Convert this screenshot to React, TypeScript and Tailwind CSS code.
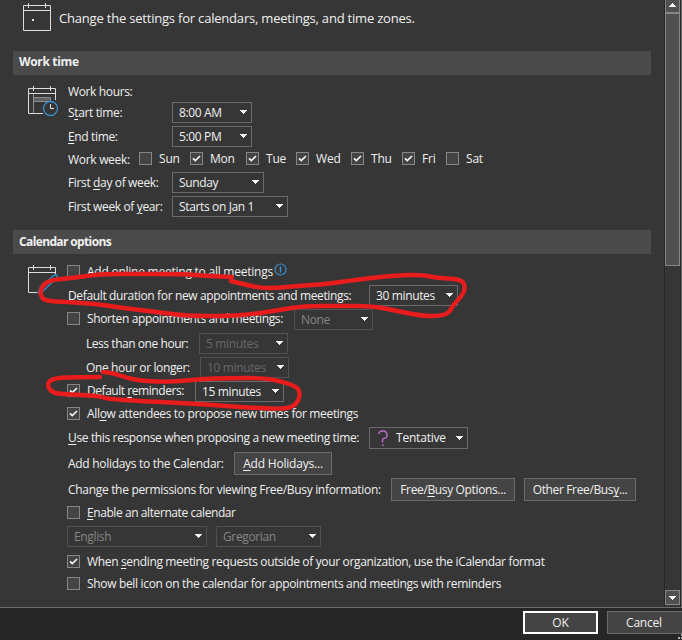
import React from 'react';
import clsx from 'clsx';

type Point = [number, number];

const days = [
  { name: 'Sun', checked: false, width: 'w-[51px]' },
  { name: 'Mon', checked: true, width: 'w-[56px]' },
  { name: 'Tue', checked: true, width: 'w-[50px]' },
  { name: 'Wed', checked: true, width: 'w-[55px]' },
  { name: 'Thu', checked: true, width: 'w-[51px]' },
  { name: 'Fri', checked: true, width: 'w-[44px]' },
  { name: 'Sat', checked: false, width: 'w-[50px]' },
];

const durationLoop: Point[] = [
  [232, 277], [207, 276], [183, 274], [133, 274], [100, 274], [73, 278], [50, 280], [42, 286], [40, 295], [45, 301],
  [67, 302], [97, 304], [123, 308], [157, 312], [187, 316], [230, 316], [253, 314], [280, 310], [303, 306], [340, 306],
  [373, 306], [397, 311], [422, 316], [440, 316], [449, 313], [453, 305], [461, 297], [465, 290], [464, 282], [457, 279],
  [437, 278], [423, 275], [403, 275], [380, 277], [347, 281], [327, 284], [297, 286], [277, 288], [260, 288], [243, 284], [231, 281],
];

const reminderLoop: Point[] = [
  [100, 377], [67, 377], [52, 379], [47, 384], [51, 392], [60, 394], [100, 396], [107, 399], [140, 401], [200, 404],
  [240, 407], [257, 408], [280, 409], [293, 407], [299, 400], [300, 391], [295, 386], [280, 381], [263, 378], [230, 378],
  [200, 379], [173, 382], [143, 381], [127, 378], [113, 373], [103, 372],
];

// Smooths a hand-drawn line by curving through the midpoints
const toPath = (points: Point[]) => {
  let d = `M${points[0][0]} ${points[0][1]}`;
  for (let i = 1; i < points.length - 1; i++) {
    const [x, y] = points[i];
    const [nx, ny] = points[i + 1];
    d += ` Q${x} ${y} ${(x + nx) / 2} ${(y + ny) / 2}`;
  }
  const last = points[points.length - 1];
  return `${d} L${last[0]} ${last[1]}`;
};

const Arrow: React.FC<{ up?: boolean; className?: string }> = ({ up, className }) => (
  <svg width="7" height="4" viewBox="0 0 7 4" shapeRendering="crispEdges" className={clsx('shrink-0', up && 'rotate-180', className)}>
    <path d="M0 0h7v1H0zM1 1h5v1H1zM2 2h3v1H2zM3 3h1v1H3z" fill="#f5f5f5" />
  </svg>
);

const Checkbox: React.FC<{ checked?: boolean }> = ({ checked }) => (
  <span className="block size-[13px] shrink-0 border border-[#868686] bg-[#444444]">
    {checked && (
      <svg width="11" height="11" viewBox="0 0 11 11">
        <path d="M2 5.3 4.3 7.6 9 3" fill="none" stroke="#f5f5f5" strokeWidth="1.7" />
      </svg>
    )}
  </span>
);

interface SelectProps {
  className: string;
  disabled?: boolean;
  dim?: boolean;
  children: React.ReactNode;
}

const Select: React.FC<SelectProps> = ({ className, disabled, dim, children }) => (
  <div
    className={clsx(
      'flex shrink-0 items-center justify-between border pr-[4px] pl-[6px]',
      disabled ? 'border-[#505050]' : 'border-[#6a6a6a]',
      disabled ? (dim ? 'text-[#676767]' : 'text-[#858585]') : 'text-[#f0f0f0]',
      className,
    )}
  >
    <span className="flex items-center">{children}</span>
    <Arrow className="mb-px" />
  </div>
);

const Button: React.FC<{ className: string; children: React.ReactNode }> = ({ className, children }) => (
  <button className={clsx('h-[23px] shrink-0 border border-[#6a6a6a] bg-[#444444] text-center leading-[21px]', className)}>
    {children}
  </button>
);

const Row: React.FC<{ className?: string; children: React.ReactNode }> = ({ className, children }) => (
  <div className={clsx('flex items-center', className ?? 'h-[21px]')}>{children}</div>
);

const U: React.FC<{ children: string }> = ({ children }) => (
  <span className="underline decoration-1 underline-offset-2">{children}</span>
);

const SectionBar: React.FC<{ title: string; className: string }> = ({ title, className }) => (
  <h2 className={clsx('ml-[13px] h-6 w-[638px] bg-[#4a4a4a] pl-[6px] font-bold', className)}>{title}</h2>
);

const App: React.FC = () => {
  return (
    <div className="relative flex h-[640px] w-[682px] flex-col overflow-hidden bg-[#363636] font-['Open_Sans','Noto_Sans',sans-serif] text-[12px] tracking-[-0.36px] whitespace-nowrap text-[#f0f0f0]">
      <div className="flex h-[607px] shrink-0">
        <main className="w-[664px] shrink-0">
          <header className="flex h-[51px] pt-[3px] pl-[23px]">
            <svg width="29" height="29" viewBox="0 0 29 29">
              <path d="M.5 27.5v-25h27v25zM.5 7.5h27M5.5 0v5M22.5 0v5" fill="none" stroke="#dcdcdc" />
              <path d="M9 16h2v2H9z" fill="#e4e4e4" />
            </svg>
            <h1 className="ml-[7px] text-[13px] leading-[30px] tracking-[-0.2px]">
              Change the settings for calendars, meetings, and time zones.
            </h1>
          </header>

          <SectionBar title="Work time" className="leading-[22px] tracking-[-0.35px]" />
          <section className="flex h-[155px]">
            <svg className="mt-[11px] ml-[28px] shrink-0" width="31" height="31" viewBox="0 0 31 31">
              <path d="M15 27.5H.5v-25h27V14M.5 7.5h27M5.5 0v5M22.5 0v5" fill="none" stroke="#dcdcdc" />
              <path d="M5.5 8v19M5.5 11.5h17v4h-17" fill="#606060" stroke="#8c8c8c" />
              <circle cx="22.5" cy="22.5" r="7" fill="#363636" stroke="#3a8fcf" strokeWidth="1.3" />
              <path d="M22.5 18v4.500H26" fill="none" stroke="#e4e4e4" />
            </svg>
            <div className="ml-[9px] pt-[7px]">
              <Row className="h-5">Work hours:</Row>
              <Row>
                <span className="w-[104px]">S<U>t</U>art time:</span>
                <Select className="h-[21px] w-[80px]">8:00 AM</Select>
              </Row>
              <Row className="mt-[3px] h-[21px]">
                <span className="w-[104px]"><U>E</U>nd time:</span>
                <Select className="h-[21px] w-[80px]">5:00 PM</Select>
              </Row>
              <Row className="mt-px h-[21px] tracking-[-0.2px]">
                <span className="w-[71px] pt-0.5 tracking-[-0.3px]">Work week:</span>
                {days.map((day) => (
                  <span key={day.name} className={clsx('flex items-center gap-[7px]', day.width)}>
                    <Checkbox checked={day.checked} />
                    {day.name}
                  </span>
                ))}
              </Row>
              <Row className="mt-[3px] h-[21px]">
                <span className="w-[104px]">First <U>d</U>ay of week:</span>
                <Select className="h-[21px] w-[92px]">Sunday</Select>
              </Row>
              <Row className="mt-[3px] h-[21px]">
                <span className="w-[104px]">First week of <U>y</U>ear:</span>
                <Select className="h-[21px] w-[116px]">Starts on Jan 1</Select>
              </Row>
            </div>
          </section>

          <SectionBar title="Calendar options" className="leading-[23px] tracking-[-0.63px]" />
          <section className="flex">
            <svg className="mt-[11px] ml-[28px] shrink-0" width="31" height="31" viewBox="0 0 31 31">
              <path d="M9 27.5H.5v-25h27V9M.5 7.5h27M5.5 0v5M22.5 0v5" fill="none" stroke="#dcdcdc" />
              <path d="m10 28 2-5L25.500 10.500q2-1.500 3.300 0t0 2.500L15 26z" fill="#363636" stroke="#3a8fcf" strokeWidth="1.3" />
            </svg>
            <div className="ml-[8px] pt-[7px]">
              <Row>
                <Checkbox />
                <span className="ml-[7px] tracking-[-0.24px]">Add online meeting to all meetings</span>
                <svg className="-mt-1 ml-px" width="13" height="13" viewBox="0 0 13 13">
                  <circle cx="6.5" cy="6.5" r="5.5" fill="none" stroke="#3a8fcf" strokeWidth="1.2" />
                  <path d="M6.5 3.5v6" stroke="#3a8fcf" strokeWidth="1.5" />
                </svg>
              </Row>
              <Row className="mt-[3px] h-[21px] pl-px">
                <span className="w-[301px]">Default duration for new appointments and meetings:</span>
                <Select className="h-[21px] w-[89px]">30 minutes</Select>
              </Row>
              <Row className="mt-[3px] h-[21px]">
                <span className="-mt-0.5 flex w-[227px] items-center gap-[7px]">
                  <Checkbox />
                  Shorten appointments and meetings:
                </span>
                <Select className="h-[21px] w-[79px]" disabled>None</Select>
              </Row>
              <Row className="mt-[3px] h-[21px] pl-[19px]">
                <span className="w-[113px] tracking-[-0.45px]">Less than one hour:</span>
                <Select className="h-[21px] w-[89px]" disabled dim>5 minutes</Select>
              </Row>
              <Row className="mt-[3px] h-[21px] pl-[19px]">
                <span className="w-[114px]">One hour or longer:</span>
                <Select className="h-[21px] w-[89px]" disabled dim>10 minutes</Select>
              </Row>
              <Row className="mt-[3px] h-[21px]">
                <span className="-mt-0.5 flex w-[128px] items-center">
                  <Checkbox checked />
                  <span className="ml-[7px] tracking-[-0.45px]">Default <U>r</U>eminders:</span>
                </span>
                <Select className="h-[21px] w-[89px]">15 minutes</Select>
              </Row>
              <Row className="mt-px h-[21px]">
                <Checkbox checked />
                <span className="ml-[7px] tracking-[-0.34px]">All<U>o</U>w attendees to propose new times for meetings</span>
              </Row>
              <Row className="mt-[3px] h-[22px] pl-px">
                <span className="w-[301px]"><U>U</U>se this response when proposing a new meeting time:</span>
                <Select className="h-[22px] w-[99px] tracking-[-0.2px]">
                  <svg className="mr-[8px] ml-[2px]" width="10" height="17" viewBox="0 0 10 17">
                    <path d="M.8 4Q1 1 4.800 1T9 4.500 6.500 8.300 4.800 12.500" fill="none" stroke="#b868c8" strokeWidth="1.5" />
                    <path d="M4 14.500h1.700V16H4z" fill="#b868c8" />
                  </svg>
                  Tentative
                </Select>
              </Row>
              <Row className="mt-[3px] h-[23px] pl-px">
                <span className="w-[166px] tracking-[-0.3px]">Add holidays to the Calendar:</span>
                <Button className="w-[98px] tracking-[-0.2px]"><U>A</U>dd Holidays...</Button>
              </Row>
              <Row className="mt-[3px] h-[23px] pl-px">
                <span className="w-[323px] tracking-[-0.31px]">Change the permissions for viewing Free/Busy information:</span>
                <Button className="w-[124px]">Free/<U>B</U>usy Options...</Button>
                <Button className="ml-[9px] w-[112px]">Other Free/Bus<U>y</U>...</Button>
              </Row>
              <Row className="mt-px h-[21px]">
                <Checkbox />
                <span className="ml-[7px] tracking-[-0.42px]"><U>E</U>nable an alternate calendar</span>
              </Row>
              <Row className="mt-[3px] h-[21px] gap-[9px]">
                <Select className="h-[21px] w-[140px]" disabled>English</Select>
                <Select className="h-[21px] w-[105px]" disabled>Gregorian</Select>
              </Row>
              <Row className="mt-1 h-[21px]">
                <Checkbox checked />
                <span className="ml-[7px] tracking-[-0.345px]">When <U>s</U>ending meeting requests outside of your organization, use the iCalendar format</span>
              </Row>
              <Row className="mt-px h-[21px]">
                <Checkbox />
                <span className="ml-[7px] tracking-[-0.33px]">Show bell icon on the calendar for appointments and meetings with reminders</span>
              </Row>
            </div>
          </section>
        </main>

        <aside className="flex w-[17px] shrink-0 flex-col border-r border-l border-[#262626] bg-[#363636]">
          <div className="flex h-[12px] items-center justify-center border-r border-l border-[#868686] bg-[#505050] pb-[2px]">
            <Arrow up />
          </div>
          <div className="h-[254px] border border-t-2 border-[#868686] bg-[#505050]" />
          <div className="mt-auto mb-[2px] flex h-[15px] items-center justify-center border border-[#868686] bg-[#505050]">
            <Arrow />
          </div>
        </aside>
        <div className="w-px bg-[#6a6a6a]" />
      </div>

      <footer className="flex h-[33px] justify-end gap-[9px] border-t border-[#6a6a6a] bg-[#262626] pt-[3px] tracking-[-0.2px]">
        <button className="h-[23px] w-[75px] border-2 border-white bg-[#444444] leading-[19px]">OK</button>
        <button className="h-[23px] w-[75px] border border-r-0 border-[#6a6a6a] bg-[#444444] pr-0.5 leading-[21px]">Cancel</button>
      </footer>

      <svg className="pointer-events-none absolute inset-0" width="682" height="640" viewBox="0 0 682 640">
        <g fill="none" stroke="#e81c1c" strokeWidth="4.4" strokeLinecap="round" strokeLinejoin="round">
          <path d={toPath(durationLoop)} />
          <path d={toPath(reminderLoop)} />
        </g>
        <path d="M678 637h2v2h-2zM681 637h1v2h-1zM681 634h1v2h-1z" fill="#b0b0b0" />
      </svg>
    </div>
  );
};

export default App;
